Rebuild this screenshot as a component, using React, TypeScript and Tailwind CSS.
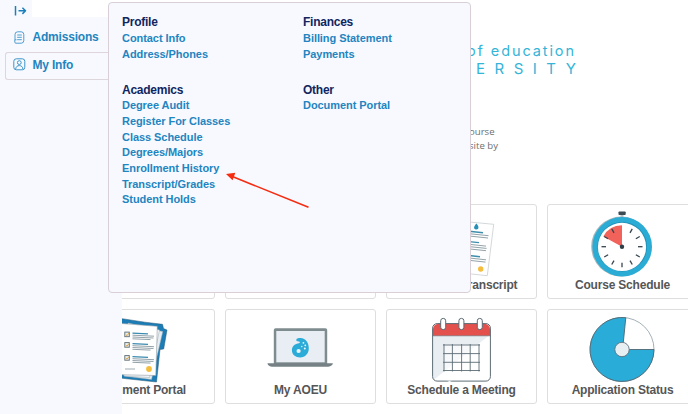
import React from "react";

type LinkGroup = { title: string; links: string[] };

const groups: LinkGroup[] = [
  { title: "Profile", links: ["Contact Info", "Address/Phones"] },
  { title: "Finances", links: ["Billing Statement", "Payments"] },
  {
    title: "Academics",
    links: [
      "Degree Audit",
      "Register For Classes",
      "Class Schedule",
      "Degrees/Majors",
      "Enrollment History",
      "Transcript/Grades",
      "Student Holds",
    ],
  },
  { title: "Other", links: ["Document Portal"] },
];

function Group({ title, links }: LinkGroup) {
  return (
    <section>
      <h3 className="text-[12px] leading-4 font-bold tracking-[-0.25px] text-[#10265f]">{title}</h3>
      <ul className="pt-[0.900px]">
        {links.map((l) => (
          <li key={l} className="text-[11px] leading-[15.650px] font-bold tracking-[-0.060px] text-[#2385c0]">
            {l}
          </li>
        ))}
      </ul>
    </section>
  );
}

function Card({ label, children }: { label?: string; children?: React.ReactNode }) {
  return (
    <div className="flex h-[95px] w-[151px] flex-col items-center rounded-[3px] border border-[#dedede] bg-white">
      <div className="h-[73px] w-[149px]">{children}</div>
      {label && (
        <div className="text-[12px] leading-[14px] font-bold tracking-[-0.200px] whitespace-nowrap text-[#555657]">
          {label}
        </div>
      )}
    </div>
  );
}

function TranscriptArt() {
  return (
    <svg viewBox="387 205 149 73" className="h-[73px] w-[149px]" fill="none">
      <path d="M448 220L493.7 224.3L487.3 275.7L443 271Z" fill="#fff" stroke="#c9ced1" strokeWidth="0.8" />
      <path d="M476.5 223.6c-3 3-3.2 5.6-.6 5.9c3 .2 3.500-2.600.6-5.900Z" fill="#2690b8" />
      <path d="M469 231.300l14 1.500M469 241.600l10 1M469 255.500l11 1.200" stroke="#3d8dad" strokeWidth="1.400" />
      <path
        d="M469 233.700l19.500 2M469 236l19 2M469 244.300l17 1.800M469 246.600l17.500 1.800M469 248.900l17 1.800M469 258l17 1.800M469 260.300l16.500 1.800"
        stroke="#87979f"
        strokeWidth="0.900"
      />
      <circle cx="480.700" cy="269" r="2.700" fill="#f5bd3e" />
    </svg>
  );
}

function StopwatchArt() {
  const ticks = [30, 60, 90, 120, 150, 180, 210, 240, 270, 300, 330];
  return (
    <svg viewBox="548 205 149 73" className="h-[73px] w-[149px]" fill="none">
      <path d="M622 214V218" stroke="#b9c3c8" strokeWidth="3" />
      <rect x="618.500" y="211.400" width="7.200" height="3.600" rx="0.800" fill="#3b4b54" />
      <circle cx="621.200" cy="246.600" r="30" fill="#a9b7bd" />
      <circle cx="622.200" cy="246.700" r="29.800" fill="#2aacd5" />
      <circle cx="622.200" cy="246.700" r="24.800" fill="#1f8fb6" />
      <circle cx="622" cy="246.900" r="24.100" fill="#fff" />
      <path d="M622 246.700V225.300A21.400 21.400 0 0 0 603.300 236.500Z" fill="#f0625a" />
      {ticks.map((a) => (
        <path key={a} d="M622 226.200V230.700" stroke="#36454e" strokeWidth="1.300" transform={`rotate(${a} 622 246.700)`} />
      ))}
      <circle cx="622" cy="246.700" r="2.200" fill="#2f3f48" />
    </svg>
  );
}

function FolderArt() {
  return (
    <svg viewBox="65 310 149 73" className="h-[73px] w-[149px]" fill="none">
      <path
        d="M104 316.500L122.300 318.700L145 322.200L162.500 324.300L163.500 328.500L167 330L163.700 349L160 349.500L156.500 382L122.300 378.300L104 376Z"
        fill="#1b7cb6"
        stroke="#2b5a76"
        strokeWidth="0.500"
      />
      <path d="M130 325L162.800 331.500L151.500 379.500L124 376Z" fill="#e7edf1" stroke="#9aaab3" strokeWidth="0.500" />
      <path d="M128 323L159.500 330L149.500 377.500L124 376Z" fill="#f6f8fa" stroke="#9aaab3" strokeWidth="0.500" />
      <path d="M110 322.600L157.300 326.300L155.800 375.500L110 374.500Z" fill="#fff" stroke="#8d9ba2" strokeWidth="0.600" />
      {[334.500, 345, 358].map((y) => (
        <g key={y}>
          <rect x="124.800" y={y - 2.400} width="4.500" height="4.600" fill="#e8edf0" stroke="#5f6d75" strokeWidth="0.900" />
          <path d={`M125.800 ${y}l1.200 1.200l2-2.700`} stroke="#d9a137" strokeWidth="0.900" />
          <path d={`M132.500 ${y - 1.300}l15.500 .7`} stroke="#3a8aae" strokeWidth="1.300" />
          <path
            d={`M132.500 ${y + 0.700}l21.500 1M132.500 ${y + 2.500}l21 1M132.500 ${y + 4.300}l18 .8`}
            stroke="#87979f"
            strokeWidth="0.900"
          />
        </g>
      ))}
      <path d="M125 369h10" stroke="#87979f" strokeWidth="0.800" />
      <circle cx="149" cy="369" r="2.900" fill="#f5bd3e" />
    </svg>
  );
}

function LaptopArt() {
  return (
    <svg viewBox="226 310 149 73" className="h-[73px] w-[149px]" fill="none">
      <rect x="273.800" y="328.200" width="53.400" height="37" rx="1.800" fill="#7f8c8f" />
      <rect x="276.300" y="331" width="48.400" height="31.300" fill="#e9eef4" />
      <path d="M267.500 363.300H332.800C332.800 365.500 330 366.800 327 366.800H273C270 366.800 267.500 365.500 267.500 363.300Z" fill="#758184" />
      <path
        d="M296.600 341C295.600 338.900 297.500 337.800 300.500 338C306 338.300 308.800 343 308.800 348.300C308.800 353.800 305.200 357.400 300.200 357.400C295.600 357.400 291.900 354.500 291.900 350.200C291.900 346 295.200 343.600 299 343.200C300.300 343 300.200 341.600 298.800 341.600Z"
        fill="#2bacd8"
      />
      <circle cx="298.600" cy="351" r="2.100" fill="#eef3f8" />
      <circle cx="303.400" cy="342.800" r="0.900" fill="#eef3f8" />
      <circle cx="305.300" cy="345.300" r="0.900" fill="#eef3f8" />
      <circle cx="304.800" cy="348.500" r="1" fill="#eef3f8" />
      <circle cx="301.800" cy="346.500" r="0.700" fill="#eef3f8" />
    </svg>
  );
}

function CalendarArt() {
  return (
    <svg viewBox="387 310 149 73" className="h-[73px] w-[149px]" fill="none">
      <rect x="432.600" y="323.600" width="57.800" height="57.500" rx="4.500" fill="#fff" />
      <path d="M432.600 335.500H489L433.500 380C432.800 379 432.600 378 432.600 376.600Z" fill="#e9eef3" />
      <path d="M432.600 335.700V330Q433.500 323.600 440 323.600H483Q489.500 323.600 490.400 330V335.700Z" fill="#e4504b" />
      <rect x="432.600" y="323.600" width="57.800" height="57.500" rx="4.500" stroke="#5c6c74" strokeWidth="1" />
      <path d="M432.600 335.800H490.400" stroke="#5c6c74" strokeWidth="0.600" />
      {[443.200, 461.400, 479.800].map((x) => (
        <rect key={x} x={x - 2.500} y="318.400" width="5" height="11.200" rx="2.400" fill="#fff" stroke="#5c6c74" strokeWidth="1" />
      ))}
      <rect x="444" y="345" width="35" height="25.500" fill="#fff" fillOpacity="0.600" />
      <path
        d="M444 344V371.500M452.400 344V371.500M461.600 344V371.500M470.200 344V371.500M479 344V371.500M443 345H480M443 353.600H480M443 362.300H480M443 370.500H480"
        stroke="#5c6c74"
        strokeWidth="0.900"
      />
      <path d="M447 380.700L449.500 382L452 380.700Z" fill="#fff" />
    </svg>
  );
}

function PieArt() {
  return (
    <svg viewBox="548 310 149 73" className="h-[73px] w-[149px]" fill="none">
      <circle cx="622" cy="349.500" r="32" fill="#fff" stroke="#8b9ba3" strokeWidth="0.800" />
      <path
        d="M622 349.500L654 349.500A32 32 0 1 1 625.800 317.700L623.300 342.400Z"
        fill="#2aacd8"
        stroke="#4d6773"
        strokeWidth="0.900"
      />
      <circle cx="622" cy="349.500" r="7.200" fill="#e8eff3" stroke="#5d727c" strokeWidth="0.900" />
    </svg>
  );
}

export default function App() {
  return (
    <div className="relative flex h-[414px] w-[688px] overflow-hidden bg-white font-['Liberation_Sans',Arial,sans-serif]">
      <aside className="flex w-[122px] shrink-0 flex-col bg-[#f8f9ff]">
        <div className="flex h-[17px]">
          <div className="w-8 shrink-0 pt-[5px] pl-[14px]">
            <svg viewBox="0 0 13 12" className="h-3 w-[13px]" fill="none" stroke="#1b7fbd" strokeWidth="1.500">
              <path d="M1.500 1V10.500M4.500 5.800H11.500M8.400 2.700L11.500 5.800L8.400 8.900" strokeLinejoin="round" />
            </svg>
          </div>
          <div className="grow bg-white" />
        </div>
        <nav className="flex flex-col pt-[7px] pl-[5px] text-[12px] leading-4 font-bold tracking-[-0.200px] text-[#2385c0]">
          <div className="flex h-[27px] items-center gap-[7.500px] pb-px pl-[9px]">
            <svg viewBox="0 0 11 13" className="h-[13px] w-[11px]" fill="none" stroke="#3b94c9" strokeWidth="0.900">
              <path d="M1 3.500Q1 .8 3.700 .8H7.200Q9.800 .8 9.800 3.500V9.500Q9.800 12.200 7.200 12.200H1.800Q.8 12.200 .8 11V8.800H2.500M1 3.500V8.800M3.200 4H7.800M3.200 6.300H7.800M3.200 8.700H7.800" />
            </svg>
            <span>Admissions</span>
          </div>
          <div className="mt-px flex h-7 items-center gap-[6.500px] rounded-l-[3px] border border-r-0 border-[#dfd6dc] pb-[3px] pl-[7px]">
            <svg viewBox="0 0 13 13" className="h-[13px] w-[13px]" fill="none" stroke="#3b94c9" strokeWidth="1">
              <rect x="0.800" y="0.800" width="11" height="11" rx="2.500" />
              <circle cx="6.300" cy="4.600" r="1.900" />
              <path d="M2.700 11.200C2.800 8.800 4.300 7.600 6.300 7.600S9.800 8.800 9.900 11.200" />
            </svg>
            <span className="pt-px">My Info</span>
          </div>
        </nav>
      </aside>

      <main className="flex min-w-0 grow flex-col overflow-hidden">
        <div className="flex h-[204px] shrink-0 flex-col pt-[42px] pl-[345px] whitespace-nowrap">
          <div className="font-['Inter',sans-serif] text-[#35b4d8]">
            <div className="text-[14.500px] leading-[18px] tracking-[1.900px]">of education</div>
            <div className="pl-[9px] text-[15px] leading-[18px] tracking-[9.500px]">ERSITY</div>
          </div>
          <div className="pt-[47px] pl-[2px] font-['Open_Sans',sans-serif] text-[9.600px] leading-[14px] text-[#6e6e6e]">
            <div>ourse</div>
            <div>site by</div>
          </div>
        </div>
        <div className="-ml-[58px] grid w-[634px] shrink-0 grid-cols-4 gap-[10px]">
          <Card />
          <Card />
          <Card label="Unofficial Transcript">
            <TranscriptArt />
          </Card>
          <Card label="Course Schedule">
            <StopwatchArt />
          </Card>
          <Card label="Document Portal">
            <FolderArt />
          </Card>
          <Card label="My AOEU">
            <LaptopArt />
          </Card>
          <Card label="Schedule a Meeting">
            <CalendarArt />
          </Card>
          <Card label="Application Status">
            <PieArt />
          </Card>
        </div>
      </main>

      <div className="absolute top-[2px] left-[108px] grid h-[291px] w-[363px] grid-cols-[181px_1fr] grid-rows-[67.500px_1fr] rounded-[4px] border border-[#d9cfd6] bg-[#f8f9ff] pt-[11px] pl-[13px]">
        {groups.map((g) => (
          <Group key={g.title} {...g} />
        ))}
      </div>

      <svg viewBox="0 0 90 40" className="absolute top-[170px] left-[222px] h-10 w-[90px]" fill="none">
        <path d="M11 6.800L86.500 37.200" stroke="#f62c10" strokeWidth="1.600" />
        <path d="M4 4L13.300 2.800L10.600 10.300Z" fill="#f62c10" />
      </svg>
    </div>
  );
}
